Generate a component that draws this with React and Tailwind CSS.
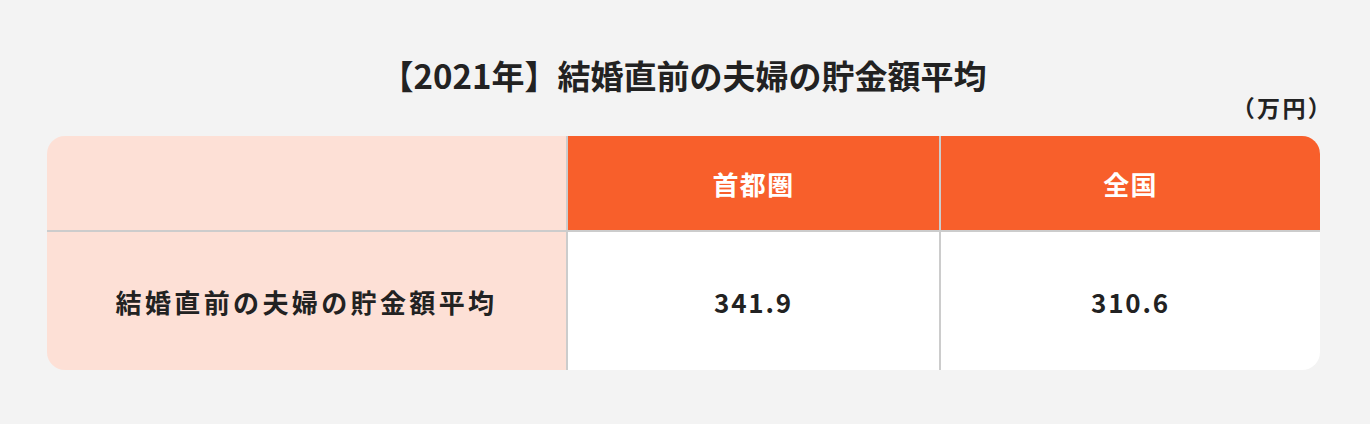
export default function App() {
  const font = { fontFamily: '"Noto Sans CJK JP", "Noto Sans", sans-serif' };
  return (
    <div className="w-[1370px] h-[424px] bg-[#f3f3f3] overflow-hidden" style={font}>
      <div className="pl-[47px] pr-[50px] pt-[57px]">
        <h1 className="text-center text-[33px] leading-[36px] font-bold text-[#222]">
          【2021年】結婚直前の夫婦の貯金額平均
        </h1>
        <div className="mt-[1px] flex justify-end">
          <span className="text-[23px] leading-[26px] font-bold text-[#222] tracking-[0.1em] mr-[-13px]">
            （万円）
          </span>
        </div>
        <div className="mt-[16px] grid grid-cols-[521px_373px_1fr] rounded-[18px] overflow-hidden">
          <div className="h-[96px] bg-[#fde0d6] border-b-2 border-r-2 border-[#cccccc]" />
          <div className="h-[96px] bg-[#f85f2b] border-b-2 border-r-2 border-[#cccccc] flex items-center justify-center text-white text-[26px] font-bold tracking-[0.05em]">
            首都圏
          </div>
          <div className="h-[96px] bg-[#f85f2b] border-b-2 border-[#cccccc] flex items-center justify-center text-white text-[26px] font-bold tracking-[0.05em]">
            全国
          </div>
          <div className="h-[138px] bg-[#fde0d6] border-r-2 border-[#cccccc] flex items-center justify-center text-[#222] text-[26px] font-bold tracking-[0.13em]">
            結婚直前の夫婦の貯金額平均
          </div>
          <div className="h-[138px] bg-white border-r-2 border-[#cccccc] flex items-center justify-center text-[#222] text-[26px] font-bold tracking-[0.07em]">
            341.9
          </div>
          <div className="h-[138px] bg-white flex items-center justify-center text-[#222] text-[26px] font-bold tracking-[0.07em]">
            310.6
          </div>
        </div>
      </div>
    </div>
  );
}
